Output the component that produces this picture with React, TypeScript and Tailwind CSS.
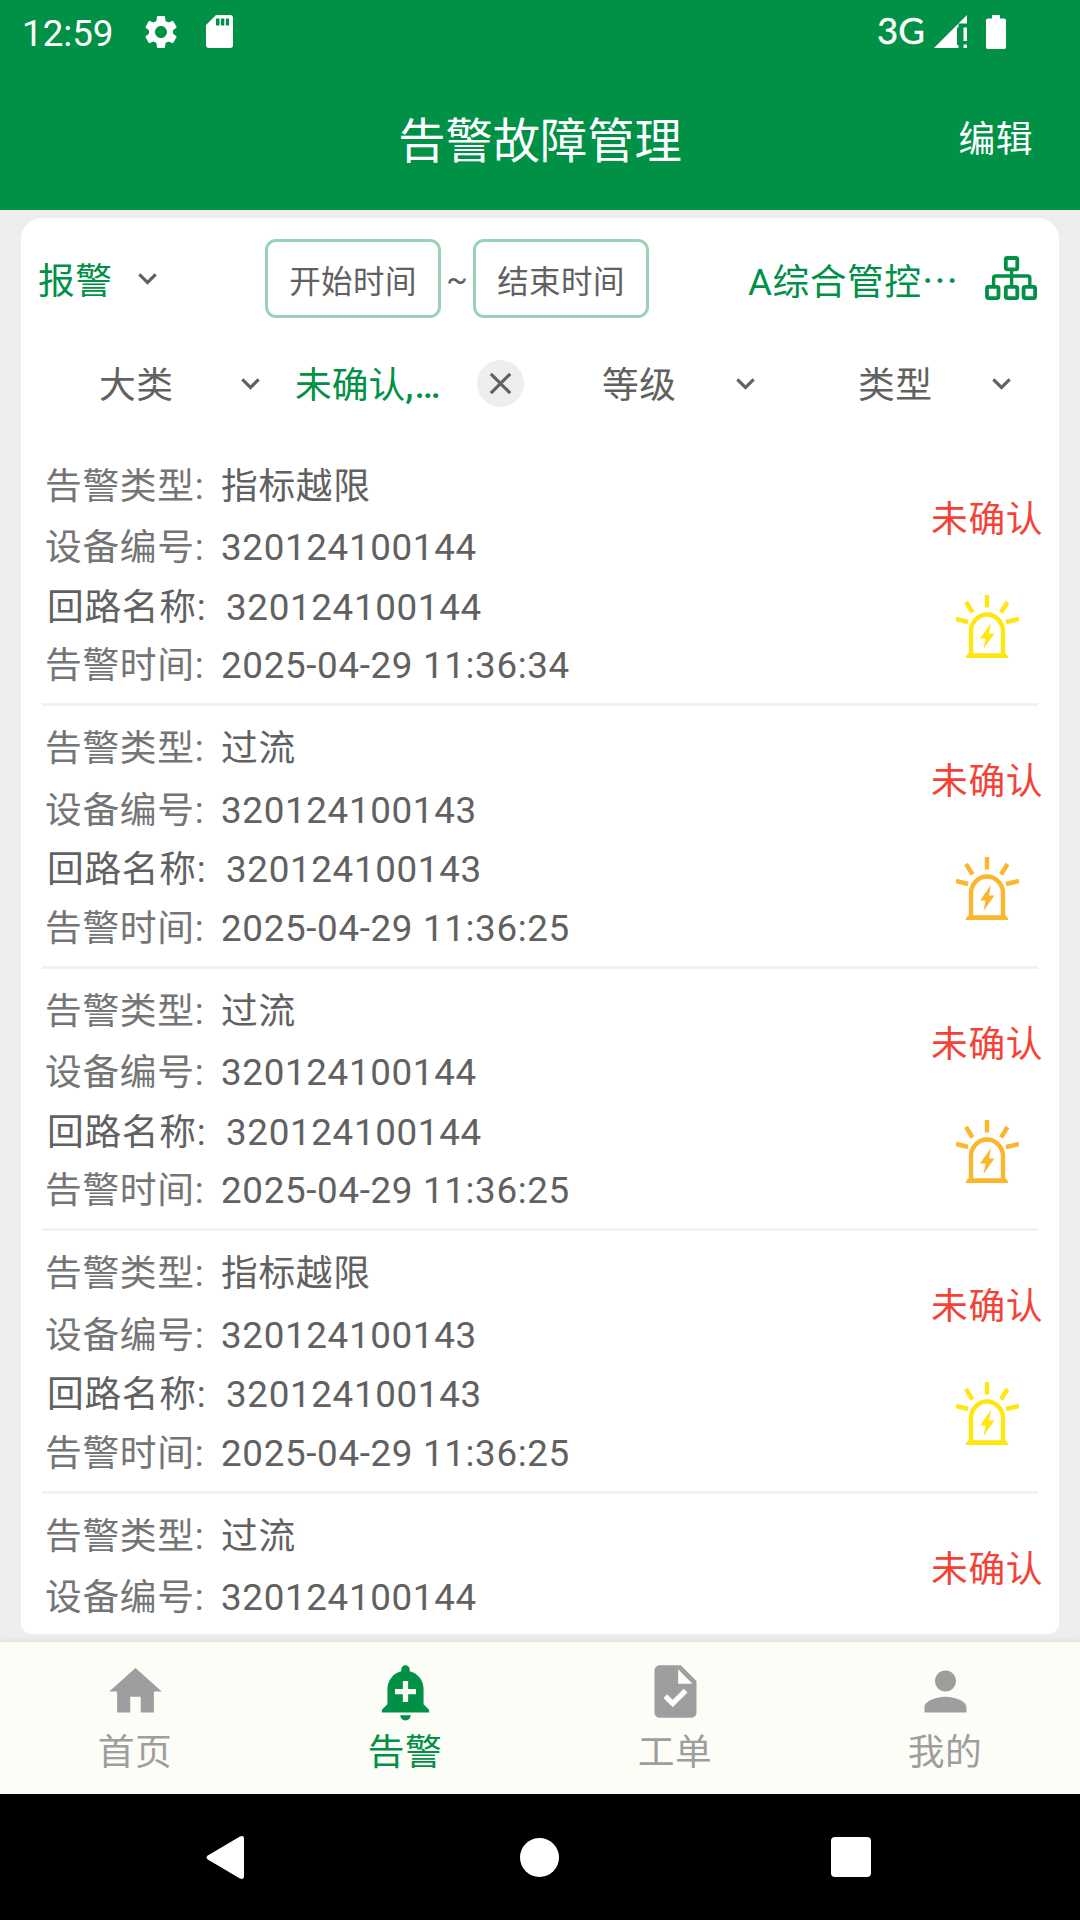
import React, { useState } from 'react';
import {
  MdAddAlert,
  MdClose,
  MdExpandMore,
  MdHome,
  MdPerson,
  MdSettings,
  MdTask,
} from 'react-icons/md';

interface AlarmItem {
  type: string;
  device: string;
  circuit?: string;
  time?: string;
  status: string;
  level: 'yellow' | 'orange';
}

const ALARMS: AlarmItem[] = [
  { type: '指标越限', device: '320124100144', circuit: '320124100144', time: '2025-04-29 11:36:34', status: '未确认', level: 'yellow' },
  { type: '过流', device: '320124100143', circuit: '320124100143', time: '2025-04-29 11:36:25', status: '未确认', level: 'orange' },
  { type: '过流', device: '320124100144', circuit: '320124100144', time: '2025-04-29 11:36:25', status: '未确认', level: 'orange' },
  { type: '指标越限', device: '320124100143', circuit: '320124100143', time: '2025-04-29 11:36:25', status: '未确认', level: 'yellow' },
  { type: '过流', device: '320124100144', status: '未确认', level: 'orange' },
];

const TABS = [
  { label: '首页', icon: MdHome },
  { label: '告警', icon: MdAddAlert },
  { label: '工单', icon: MdTask },
  { label: '我的', icon: MdPerson },
];

const SirenIcon = ({ className }: { className: string }) => (
  <svg className={className} viewBox="0 0 63 63" fill="none" stroke="currentColor" strokeWidth={4.4}>
    <path d="M31 0V12.500M10 7L16.500 17.500M51.500 7L45 17.500M0 24L12 27M63 24L50 27" />
    <path d="M15 60V36.500a16 17 0 0 1 32 0V60" />
    <path d="M9.500 63q1.500-4.800 4-4.800h35q2.500 0 4 4.800z" fill="currentColor" stroke="none" />
    <path d="M35 28L24 43.500H29.500L27.500 54L38.500 38.500H33z" fill="currentColor" stroke="none" />
  </svg>
);

const OrgIcon = () => (
  <svg className="h-[46px] w-[53px] text-[#009147]" viewBox="0 0 53 46" fill="none" stroke="currentColor" strokeWidth={3.8}>
    <rect x="20.800" y="2" width="11.500" height="11.300" rx="1.500" />
    <rect x="2" y="30.800" width="11.500" height="11.300" rx="1.500" />
    <rect x="20.800" y="30.800" width="11.500" height="11.300" rx="1.500" />
    <rect x="38.600" y="30.800" width="11.500" height="11.300" rx="1.500" />
    <path d="M26.600 14V30M8.600 30V22Q8.600 20 10.600 20H42.800Q44.800 20 44.800 22V30" strokeWidth={3.4} />
  </svg>
);

const StatusBar = () => (
  <div className="flex h-[63px] items-center pl-[22px] text-white">
    <span className="w-[119px] pt-[5px] text-[36.75px] leading-none">12:59</span>
    <MdSettings className="h-[40px] w-[40px]" />
    <svg className="ml-[24.5px] h-[33px] w-[27px]" viewBox="0 0 27 33" fill="currentColor">
      <path fillRule="evenodd" d="M10 0H24q3 0 3 3V30q0 3-3 3H3q-3 0-3-3V10zM10 3.500V10.500h3.500V3.500zM15 3.500V10.500h3.300V3.500zM19.800 3.500V10.500h3.300V3.500z" />
    </svg>
    <span className="ml-[644.5px] w-[57px] pb-[2px] font-['Lato',sans-serif] text-[36.5px] leading-none [-webkit-text-stroke:0.4px]">3G</span>
    <svg className="h-[33px] w-[33px]" viewBox="0 0 33 33" fill="currentColor">
      <path d="M33 0V8.500H24.500z" />
      <path d="M0 33L24.500 8.500V12.500H23V30H24.500V33z" />
      <path d="M29.500 12.500H33V26H29.500zM29.500 29.500H33V33H29.500z" />
    </svg>
    <svg className="ml-[19px] h-[34px] w-[20px]" viewBox="0 0 20 34" fill="currentColor">
      <path d="M6 0h8V3.500h4q2 0 2 2V32q0 2-2 2H2q-2 0-2-2V5.500q0-2 2-2h4z" />
    </svg>
  </div>
);

const Chevron = () => <MdExpandMore className="h-[37px] w-[37px] shrink-0 text-[#616161]" />;

const AlarmRow = ({ item }: { item: AlarmItem }) => (
  <li className="mx-[21px] flex h-[262.5px] shrink-0 justify-between border-b-[3px] border-[#f2f2f2] pt-[12.5px]">
    <div className="leading-none tracking-[0.66px]">
      <div className="flex h-[62px] items-center pl-[3px]">
        <span className="w-[176px] text-[#757575]">告警类型:</span>
        <span>{item.type}</span>
      </div>
      <div className="flex h-[61px] items-center pl-[3px]">
        <span className="w-[176px] text-[#757575]">设备编号:</span>
        <span>{item.device}</span>
      </div>
      {item.circuit && (
        <div className="flex h-[58px] items-center pl-[5px]">
          <span className="w-[179px]">回路名称:</span>
          <span>{item.circuit}</span>
        </div>
      )}
      {item.time && (
        <div className="flex h-[59px] items-center pl-[3px]">
          <span className="w-[176px] text-[#757575]">告警时间:</span>
          <span>{item.time}</span>
        </div>
      )}
    </div>
    <div className="-mr-[6px] flex w-[113px] flex-col pt-[41.5px]">
      <span className="leading-[44px] tracking-[0.66px] whitespace-nowrap text-[#f44336]">{item.status}</span>
      <SirenIcon
        className={`mt-[53px] ml-[25px] h-[63px] w-[63px] ${item.level === 'yellow' ? 'text-[#ffe60f]' : 'text-[#fbb62d]'}`}
      />
    </div>
  </li>
);

export default function App() {
  const [activeTab, setActiveTab] = useState(1);

  return (
    <div className="flex h-[1920px] w-[1080px] flex-col overflow-hidden bg-[#eeeeee] font-['Roboto','Noto_Sans_CJK_SC',sans-serif] text-[36.75px] text-[#616161]">
      <header className="h-[210px] shrink-0 bg-[#009147] text-white">
        <StatusBar />
        <div className="grid h-[147px] grid-cols-[1fr_auto_1fr] items-center">
          <span />
          <h1 className="pt-[12px] text-[47.25px] leading-none">告警故障管理</h1>
          <button className="justify-self-end pt-[8px] pr-[47px] leading-none tracking-[0.5px]">编辑</button>
        </div>
      </header>

      <main className="mx-[21px] mt-[8px] flex h-[1416px] shrink-0 flex-col overflow-hidden rounded-t-[21px] rounded-b-[11px] bg-white">
        {/* Date range and project */}
        <div className="mt-[21px] flex h-[79px] shrink-0 items-center leading-none">
          <span className="w-[98px] pt-[7px] pl-[17px] whitespace-nowrap tracking-[0.4px] text-[#009147]">报警</span>
          <span className="ml-[10px]"><Chevron /></span>
          <button className="ml-[99px] h-[79px] w-[176px] rounded-[11px] border-[3px] border-[#99d3b5] pt-[8px] text-[31.5px] tracking-[0.4px]">开始时间</button>
          <span className="w-[32px] pt-[2px] text-center text-[31.5px]">~</span>
          <button className="h-[79px] w-[176px] rounded-[11px] border-[3px] border-[#99d3b5] pt-[8px] text-[31.5px] tracking-[0.4px]">结束时间</button>
          <span className="ml-[99px] w-[237px] pt-[5px] whitespace-nowrap tracking-[0.5px] text-[#009147]">
            A综合管控<span className="font-['Noto_Sans_CJK_SC',sans-serif]">…</span>
          </span>
          <OrgIcon />
        </div>

        {/* Filters */}
        <div className="flex h-[125.5px] shrink-0 items-center pt-[5px] leading-none">
          <span className="ml-[78px] w-[132.5px] pt-[7px] tracking-[0.4px]">大类</span>
          <Chevron />
          <span className="ml-[26.5px] w-[182px] pt-[7px] whitespace-nowrap text-[#009147]">
            未确认<span className="font-medium tracking-[1px]">,…</span>
          </span>
          <button className="flex h-[47px] w-[47px] items-center justify-center rounded-full bg-[#eeeeee]">
            <MdClose className="h-[37px] w-[37px]" />
          </button>
          <span className="ml-[78px] w-[125px] pt-[7px] tracking-[0.4px]">等级</span>
          <Chevron />
          <span className="ml-[94px] w-[125px] pt-[7px] tracking-[0.4px]">类型</span>
          <Chevron />
        </div>

        <ul className="flex flex-col">
          {ALARMS.map((item, idx) => (
            <AlarmRow key={idx} item={item} />
          ))}
        </ul>
      </main>

      <nav className="mt-[8px] flex h-[152px] shrink-0 bg-[#fcfdf6] shadow-[0_-2px_5px_rgba(0,0,0,0.06)]">
        {TABS.map((tab, idx) => (
          <button
            key={tab.label}
            onClick={() => setActiveTab(idx)}
            className={`flex flex-1 flex-col items-center pt-[18px] ${activeTab === idx ? 'text-[#009147]' : 'text-[#9e9e9e]'}`}
          >
            <tab.icon className="h-[63px] w-[63px]" />
            <span className="mt-[8px] leading-[44px] tracking-[0.4px]">{tab.label}</span>
          </button>
        ))}
      </nav>

      {/* System navigation */}
      <div className="flex h-[126px] shrink-0 items-center justify-between bg-black pr-[209px] pl-[206px]">
        <svg className="h-[43px] w-[39px]" viewBox="0 0 39 43" fill="white">
          <path d="M1.800 19.500L33.500 0.800Q38 -1.200 38 2.500V40.500Q38 44.200 33.500 42.200L1.800 23.500Q-0.600 21.500 1.800 19.500z" />
        </svg>
        <div className="ml-[2px] h-[39px] w-[39px] rounded-full bg-white" />
        <div className="h-[40px] w-[40px] rounded-[4px] bg-white" />
      </div>
    </div>
  );
}
